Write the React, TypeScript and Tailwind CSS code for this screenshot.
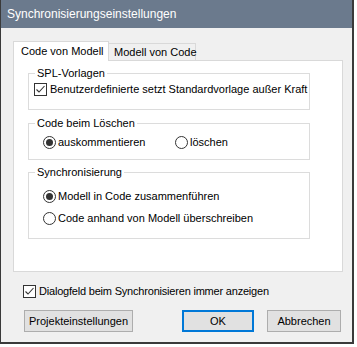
import React from 'react';

const font = { fontFamily: '"Liberation Sans", Arial, sans-serif' };

function CheckBox({ checked }: { checked: boolean }) {
  return (
    <svg width="13" height="13" viewBox="0 0 13 13" className="shrink-0">
      <rect x="0.5" y="0.5" width="12" height="12" fill="#fff" stroke="#333" />
      {checked && <polyline points="2.5,6.5 5,9 10.5,3" fill="none" stroke="#333" strokeWidth="1.1" />}
    </svg>
  );
}

function Radio({ checked }: { checked: boolean }) {
  return (
    <svg width="13" height="13" viewBox="0 0 13 13" className="shrink-0">
      <circle cx="6.5" cy="6.5" r="6" fill="#fff" stroke="#333" />
      {checked && <circle cx="6.5" cy="6.5" r="3.5" fill="#333" />}
    </svg>
  );
}

function Group({ title, children, className }: { title: string; children: React.ReactNode; className?: string }) {
  return (
    <fieldset className={`border border-[#dcdcdc] w-[282px] ${className ?? ''}`}>
      <legend className="ml-[6px] px-[2px] leading-[14px]">{title}</legend>
      {children}
    </fieldset>
  );
}

export default function App() {
  return (
    <div className="w-[357px] h-[347px] bg-white text-[11px] text-black whitespace-nowrap" style={font}>
      <div className="w-[354px] h-[344px] border-l border-r-2 border-b-2 border-[#3a3a3a] bg-[#f0f0f0] flex flex-col">
        {/* Title bar */}
        <div className="h-[28px] bg-[#6b7a8d] text-white text-[12px] pl-[6px] flex items-center shrink-0">
          Synchronisierungseinstellungen
        </div>

        <div className="pl-[12px] pt-[13px]">
          {/* Tabs */}
          <div className="flex items-end h-[19px]">
            <div className="w-[96px] h-[20px] bg-white border-t border-l border-r border-[#d9d9d9] relative z-10 -mb-px flex items-center pl-[7px]">
              Code von Modell
            </div>
            <div className="w-[87px] h-[17px] border-t border-r border-[#d9d9d9] flex items-center pl-[5px]">
              Modell von Code
            </div>
          </div>

          {/* Tab panel */}
          <div className="w-[330px] h-[212px] bg-white border border-[#d9d9d9] pl-[14px] pt-[5px]">
            <Group title="SPL-Vorlagen">
              <div className="h-[29px] flex items-start pt-[3px] pl-[5px] gap-[3px]">
                <CheckBox checked />
                <span className="leading-[13px]">Benutzerdefinierte setzt Standardvorlage außer Kraft</span>
              </div>
            </Group>

            <Group title="Code beim Löschen" className="mt-[6px]">
              <div className="h-[29px] flex items-start pt-[6px] pl-[14px]">
                <div className="flex items-center gap-[2px] w-[132px]">
                  <Radio checked />
                  <span className="leading-[13px]">auskommentieren</span>
                </div>
                <div className="flex items-center gap-[2px]">
                  <Radio checked={false} />
                  <span className="leading-[13px]">löschen</span>
                </div>
              </div>
            </Group>

            <Group title="Synchronisierung" className="mt-[5px]">
              <div className="h-[59px] flex flex-col pt-[11px] pl-[14px] gap-[9px]">
                <div className="flex items-center gap-[2px]">
                  <Radio checked />
                  <span className="leading-[13px]">Modell in Code zusammenführen</span>
                </div>
                <div className="flex items-center gap-[2px]">
                  <Radio checked={false} />
                  <span className="leading-[13px]">Code anhand von Modell überschreiben</span>
                </div>
              </div>
            </Group>
          </div>

          {/* Always show */}
          <div className="flex items-center gap-[3px] mt-[13px] pl-[10px] h-[13px]">
            <CheckBox checked />
            <span className="leading-[13px] tracking-[-0.2px]">Dialogfeld beim Synchronisieren immer anzeigen</span>
          </div>

          {/* Buttons */}
          <div className="flex mt-[12px] pl-[11px]">
            <button className="w-[109px] h-[22px] bg-[#e1e1e1] border border-[#adadad] text-[11px]">
              Projekteinstellungen
            </button>
            <button className="w-[72px] h-[22px] ml-[49px] bg-[#e1e1e1] border-2 border-[#0078d7] text-[11px]">
              OK
            </button>
            <button className="w-[74px] h-[22px] ml-[13px] bg-[#e1e1e1] border border-[#adadad] text-[11px]">
              Abbrechen
            </button>
          </div>
        </div>
      </div>
    </div>
  );
}
